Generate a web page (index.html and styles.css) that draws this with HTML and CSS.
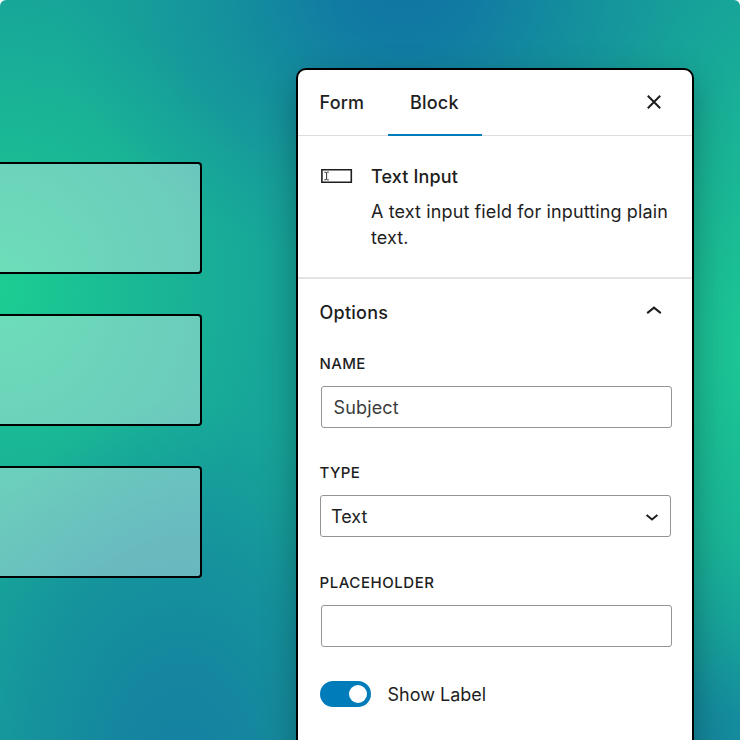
FILE: index.html
```html
<!DOCTYPE html>
<html lang="en">
<head>
<meta charset="utf-8">
<title>Block settings</title>
<link rel="stylesheet" href="styles.css">
</head>
<body>
<main class="stage">
  <div class="fields">
    <div class="field"></div>
    <div class="field"></div>
    <div class="field"></div>
  </div>
  <aside class="panel">
    <header class="tabs">
      <div class="tab tab-form"><span>Form</span></div>
      <div class="tab tab-active"><span>Block</span></div>
      <svg class="close" width="16" height="16" viewBox="0 0 16 16"><path d="M1.8 1.8l12.4 12.4M14.2 1.8L1.8 14.2"/></svg>
    </header>
    <section class="card">
      <svg class="card-icon" width="32" height="16" viewBox="0 0 32 16"><path class="frame" d="M.9 1.8h29.4v12.4H.9z"/><path class="cursor" d="M3.4 4.2H5l.6.5.6-.5h1.6M5.6 4.7v6.6M3.4 11.8H5l.6-.5.6.5h1.6"/></svg>
      <div class="card-body">
        <h2 class="card-title">Text Input</h2>
        <p class="card-text">A text input field for inputting plain text.</p>
      </div>
    </section>
    <section class="options">
      <div class="options-head">
        <h2 class="options-title">Options</h2>
        <svg class="chevron" width="16" height="10" viewBox="0 0 16 10"><path d="M1.2 8.1L8 2.6l6.8 5.5"/></svg>
      </div>
      <div class="control">
        <div class="label">NAME</div>
        <div class="box box-input"><span class="value">Subject</span></div>
      </div>
      <div class="control">
        <div class="label">TYPE</div>
        <div class="box box-select"><span>Text</span><svg width="12" height="8" viewBox="0 0 12 8"><path d="M.6 1.9L6 6.4l5.4-4.5"/></svg></div>
      </div>
      <div class="control">
        <div class="label label-placeholder">PLACEHOLDER</div>
        <div class="box box-input"></div>
      </div>
      <div class="toggle-row">
        <div class="toggle"><div class="knob"></div></div>
        <span class="toggle-label">Show Label</span>
      </div>
    </section>
  </aside>
</main>
</body>
</html>
```
FILE: styles.css
```css
* { box-sizing: border-box; }
body { margin: 0; background: #fff; font-family: Inter, "Liberation Sans", sans-serif; color: #1e1e1e; }
h2, p { margin: 0; }
svg { display: block; flex: none; fill: none; stroke: #1e1e1e; stroke-width: 2; }

.stage {
  width: 740px;
  height: 740px;
  overflow: hidden;
  display: flex;
  align-items: flex-start;
  border-radius: 6px 6px 0 0;
  background:
    radial-gradient(ellipse 350px 280px at 405px -10px, #1075a4 0%, rgba(16, 119, 164, .9) 20%, rgba(18, 128, 160, .58) 50%, rgba(20, 140, 156, .24) 78%, rgba(22, 150, 154, 0) 100%),
    radial-gradient(ellipse 260px 370px at 182px 770px, #1480a2 0%, rgba(20, 130, 160, .86) 28%, rgba(20, 136, 158, .62) 60%, rgba(20, 140, 158, .25) 82%, rgba(20, 144, 158, 0) 100%),
    radial-gradient(ellipse 280px 300px at 0 290px, #1ccd92 0%, rgba(28, 200, 146, .54) 50%, rgba(28, 195, 146, 0) 100%),
    radial-gradient(ellipse 280px 360px at 750px 350px, #1cc693 0%, rgba(28, 198, 147, 0) 100%),
    radial-gradient(ellipse 240px 240px at 710px 765px, #14869e 0%, rgba(20, 134, 158, .7) 35%, rgba(20, 138, 154, 0) 100%),
    #17a599;
}

.fields { width: 202px; margin-right: 94px; padding-top: 162px; display: grid; gap: 40px; }
.field { height: 112px; border: 2px solid #000; border-left: 0; border-radius: 0 4px 4px 0; background: rgba(255, 255, 255, .36); background-clip: padding-box; }

.panel {
  width: 398px;
  height: 700px;
  margin-top: 68px;
  border: 2px solid #000;
  border-radius: 10px;
  background: #fff;
  box-shadow: 0 14px 36px rgba(0, 0, 0, .3);
}

.tabs { height: 66px; display: flex; align-items: stretch; border-bottom: 1px solid #ddd; font-size: 18px; font-weight: 550; letter-spacing: .2px; }
.tab { height: 66px; display: flex; align-items: center; padding: 0 22px; }
.tab-form { width: 89.5px; padding: 0 0 1px 21.5px; }
.tab-active { width: 94.5px; border-bottom: 2px solid #007cba; padding: 1px 0 0 22.5px; }
.close { align-self: center; margin: -1px 30px 0 auto; }

.card { height: 143px; display: flex; padding: 28px 18px 0 22px; border-bottom: 2px solid #e4e4e4; }
.card-icon { margin: 4px 18px 0 1px; stroke-width: 1.6; }
.cursor { stroke-width: .9; }
.card-title { font-size: 18px; line-height: 26px; font-weight: 550; letter-spacing: .15px; }
.card-text { margin-top: 9px; font-size: 18px; line-height: 26px; letter-spacing: .12px; }

.options { padding: 20px 0 0 21.5px; }
.options-head { display: flex; justify-content: space-between; align-items: center; height: 26px; padding-right: 30px; }
.options-title { font-size: 18px; font-weight: 550; letter-spacing: .25px; }
.chevron { margin-top: -4px; }
.label { height: 20px; line-height: 20px; font-size: 15px; font-weight: 550; letter-spacing: .4px; }
.label-placeholder { letter-spacing: .55px; }
.control { margin-top: 29px; }
.control + .control { margin-top: 35.3px; }
.box { height: 42px; width: 351.5px; margin-top: 12px; border: 1.5px solid #949494; border-radius: 3px; display: flex; align-items: center; font-size: 18px; }
.box-input { margin-left: 1px; padding-left: 12px; }
.box-select { padding: 1px 12px 0 10.5px; justify-content: space-between; }
.value { color: #3c3c3c; letter-spacing: .15px; }
.toggle-row { display: flex; align-items: center; gap: 17px; margin-top: 34.5px; height: 26px; font-size: 18px; }
.toggle { width: 51px; height: 26px; border-radius: 13px; background: #007cba; display: flex; justify-content: flex-end; align-items: center; padding-right: 4px; }
.knob { width: 18px; height: 18px; border-radius: 50%; background: #fff; }
```
